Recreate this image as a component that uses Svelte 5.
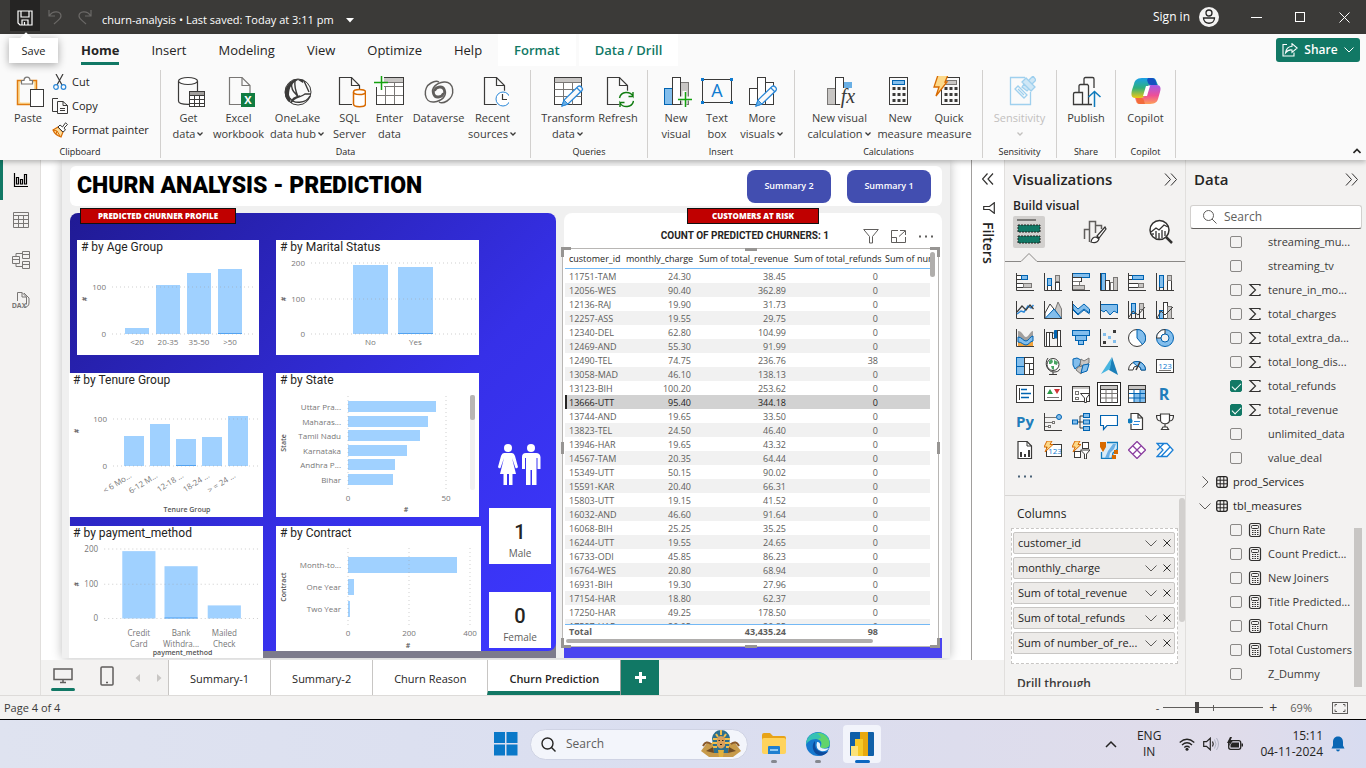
<script>
  const D = '#3b3a39';
  const B = '#83beec';
  const BS = '#0063b1';
  const G = '#c8c6c4';
  const GS = '#797775';
  const box = (x, y, w, h, f = 'none', s = D) => `<rect x="${x}" y="${y}" width="${w}" height="${h}" fill="${f}" stroke="${s}"/>`;
  const line = (d, s = D, w = 1, f = 'none') => `<path d="${d}" fill="${f}" stroke="${s}" stroke-width="${w}"/>`;
  const axis = line('M.5 0V17.5H18');
  const dot = (x, y, r, f, s = 'none') => `<circle cx="${x}" cy="${y}" r="${r}" fill="${f}" stroke="${s}"/>`;
  const glyph = (x, y, size, f, t, extra = '') => `<text x="${x}" y="${y}" font-size="${size}" fill="${f}" text-anchor="middle" ${extra}>${t}</text>`;
  const bolt = (x, y) => `<path transform="translate(${x} ${y})" d="M3 0H8L6 3.5H9L1 11L3.2 6H0Z" fill="#fcd98a" stroke="#d86a00"/>`;
  const pages = (x) => line(`M${x} 1.5H${x + 12}L${x + 20} 9.5V28.5H${x}Z`, D, 1.2, '#fafafa') + line(`M${x + 12} 1.5V9.5H${x + 20}`, D, 1.2);
  const pencil = line('M10 30L12 24L26 10.5C28 9 31.500 12 30 14.500L16 28Z', '#2b88d8', 1.300, '#fafafa') + line('M10 30L12 24L16 28Z', '#2b88d8', 1, '#69afe5') + line('M25 12L29 16', '#2b88d8', 1.200);
  const keypad = (x) => {
    let s = box(x, 1.5, 18, 27, '#fafafa', D);
    for (let r = 0; r < 3; r++) for (let c = 0; c < 3; c++) s += `<rect x="${x + 3 + c * 5}" y="${11 + r * 6}" width="3" height="3" fill="${D}"/>`;
    return s;
  };

  const ribbonIcons = {
    paste: line('M5.500 4.500H24.500V28.500H5.500Z', '#e07b10', 1.500, '#fcdc9a') + line('M8.500 7H21.500V26H8.500Z', '#fafafa', 1, '#fafafa') + line('M9.500 8V4.500H12C12 0 18 0 18 4.500H20.500V8Z', GS, 1.200, '#fff') + box(18.5, 13.5, 13, 17, '#fff'),
    getdata: line('M5.500 5V25C5.500 29.500 24.500 29.500 24.500 25V5', D, 1.200, '#fafafa') + '<ellipse cx="15" cy="5" rx="9.500" ry="3.500" fill="#fff" stroke="#3b3a39" stroke-width="1.200"/>' + box(16.5, 15.5, 15, 15, '#fff') + '<path d="M17 16h14v3H17z" fill="#a19f9d"/>' + line('M16.500 19.500H31.500M16.500 23.500H31.500M16.500 27.500H31.500M21.500 19.500V30.500M26.500 19.500V30.500', D),
    excel: line('M6.500 1.500H19L27 9.500V28.500H6.500Z', GS, 1.200, '#fafafa') + line('M19 1.500V9.500H27', GS, 1.200) + '<path d="M18 17h14v14H18z" fill="#107c41"/>' + glyph(25, 28, 11, '#fff', 'X', 'font-weight="700"'),
    onelake: dot(16, 16, 13, '#fafafa', D) + '<path d="M14 3C2 7 0 20 7 26C9 26 9 23 7 19C7 11 10 7 16 4L21 7L22 4Z" fill="#3b3a39"/>' + line('M10 6C8 15 14 17 16 21C14 16 12 11 13 5M9 27C13 20 18 22 23 18L29 18M22 5L27 16M8 22C11 28 24 28 28 20M18 20C12 21 10 23 9 26', D, 1.400),
    sql: pages(5.5) + '<path d="M18 13h15v19H18z" fill="#fafafa"/>' + line('M19.500 16V28C19.500 31.500 31.500 31.500 31.500 28V16', '#d86a00', 1.500, '#fff') + '<ellipse cx="25.500" cy="16" rx="6" ry="2.500" fill="#fff" stroke="#d86a00" stroke-width="1.500"/>',
    enter: box(2.5, 1.5, 27, 27, '#fff') + '<path d="M10 2h19v4H10z" fill="#c8c6c4"/>' + line('M2.500 10.500H29.500M2.500 19.500H29.500M11.500 10V28.500M20.500 6V28.500M10 6.500H29.500', GS) + box(2.5, 1.5, 27, 27, 'none') + '<path d="M0 0H10V11H0Z" fill="#fafafa"/>' + line('M0 6.500H14M7.500 0V14', '#13a10e', 1.500),
    dataverse: line('M8 7C-1 12 1 27 11 26C19 25 24 20 22 14C20 8 11 10 11 16C11 21 18 22 20 17M24 25C33 20 31 5 21 6C13 7 8 12 10 18C12 24 21 22 21 16C21 11 14 10 12 15M8 7C13 4 16 6 16 6M24 25C19 28 16 26 16 26', '#605e5c', 1.500),
    recent: pages(7.5) + '<circle cx="26" cy="23" r="8.500" fill="#fafafa"/>' + dot(26, 23, 7, '#fff', '#2b88d8') + line('M25.500 18V23.500H30', D, 1.200),
    transform: box(2.5, 1.5, 27, 27, '#fff') + '<path d="M3 2h26v4H3z" fill="#c8c6c4"/>' + line('M2.500 6.500H29.500M2.500 13.500H29.500M2.500 20.500H29.500M11.500 6V28.500M20.500 6V28.500', GS) + pencil,
    refresh: pages(5.5) + '<circle cx="24.500" cy="23.500" r="9" fill="#fafafa"/>' + line('M17.500 22C19 15 28 15 31 20V16M31 20.500H26.500M31.500 25C30 32 21 32 18 27V31M18 26.500H22.500', '#107c10', 1.400),
    newvisual: box(4.5, 12.5, 8, 16, B, BS) + box(20.5, 6.5, 8, 22, G, GS) + box(12.5, 1.5, 8, 27, '#fff') + line('M17 22.500H32M24.500 15V31', '#fafafa', 4) + line('M18 23.500H32M25.500 16V31', '#13a10e', 1.500),
    textbox: box(1.5, 3.5, 29, 23, '#fafafa') + glyph(16, 21, 18, '#0f7bd0', 'A') + '<path d="M0 2h3v3H0zM29 2h3v3h-3zM0 25h3v3H0zM29 25h3v3h-3z" fill="#0f7bd0"/>',
    more: box(3.5, 12.5, 8, 16, '#fff') + box(19.5, 6.5, 8, 22, '#fff') + box(11.5, 1.5, 8, 27, '#fff') + pencil,
    calc: box(3.5, 12.5, 8, 16, G, GS) + '<path d="M20 6h8v9h-8z" fill="#69afe5"/>' + box(11.5, 1.5, 8, 27, '#fff') + '<path d="M18 12h13v18H16z" fill="#fafafa"/>' + glyph(24, 27, 20, D, 'fx', 'font-style="italic" font-family="Liberation Serif, serif"'),
    measure: keypad(5.5) + box(8.5, 4.5, 12, 4, B, BS),
    quick: keypad(8.5) + box(11.5, 4.500, 12, 4, G, GS) + '<path d="M5 -1H15L12 6H14L3 20L6 11H1Z" fill="#fcd98a" stroke="#d86a00" stroke-width="1.300"/>',
    sensitivity: line('M21 1.500H6.500V28.500H26.500V16', '#9fd0ee', 1.300) + line('M11 13L14 10L23 19L20 22ZM14 13L20 19', '#9fd0ee', 1.300) + line('M18 6L27 15L31 11L22 2ZM25 4L29 0L32 4L28 8M20 8L18 11L23 15L25 13', '#9fd0ee', 1.300, '#cfe7f6'),
    publish: line('M3.500 28.500V18Q3.500 16.500 5 16.500H12.500V28.500ZM9 16V10Q9 8.500 10.500 8.500H18M14 8V3Q14 1.500 15.500 1.500H22.500Q24 1.500 24 3V12M18.500 28.500V10Q18.500 8.500 17 8.500H14M12.500 28.500H22', D, 1.300) + line('M24.500 31V16M18.500 21L24.500 15.500L30.500 21', '#0f7bbd', 1.500),
    copilot: '<defs><linearGradient id="ca" x1="0" y1="0" x2="0" y2="1"><stop offset="0" stop-color="#1aa0e8"/><stop offset=".5" stop-color="#2eb07c"/><stop offset="1" stop-color="#f2c811"/></linearGradient><linearGradient id="cb" x1="0" y1="0" x2="0" y2="1"><stop offset="0" stop-color="#a35be8"/><stop offset=".55" stop-color="#ee4f97"/><stop offset="1" stop-color="#ffa057"/></linearGradient></defs><path d="M14 2H23C26 2 26 5 28 9H20C17 9 17 13 15 20C14 22 12 22 9 22H5C1 22 1 18 2 14L4 8C5 3 8 2 14 2Z" fill="url(#ca)"/><path d="M18 2H22C25 2 26 5 27 9H21C18 9 18 6 17 4Z" fill="#1550c0"/><path d="M18 28H9C6 28 6 24 5 22H11C15 22 15 18 17 12C18 9 20 9 23 9H27C31 9 31 13 30 16L28 23C27 27 24 28 18 28Z" fill="url(#cb)"/><path d="M14 28H10C7 28 7 25 6 22H11C14 22 14 25 15 28Z" fill="#f26b3c"/><path d="M13 20L16 10H20L17 20Z" fill="#fff"/>'
  };

  const groups = [
    { name: 'Data', w: 370, items: [
      { i: 'getdata', a: 'Get', b: 'data', c: 1, w: 50 }, { i: 'excel', a: 'Excel', b: 'workbook', w: 50 },
      { i: 'onelake', a: 'OneLake', b: 'data hub', c: 1, w: 68 }, { i: 'sql', a: 'SQL', b: 'Server', w: 36 },
      { i: 'enter', a: 'Enter', b: 'data', w: 44 }, { i: 'dataverse', a: 'Dataverse', b: '', w: 54 },
      { i: 'recent', a: 'Recent', b: 'sources', c: 1, w: 54 } ] },
    { name: 'Queries', w: 117, items: [
      { i: 'transform', a: 'Transform', b: 'data', c: 1, w: 58 }, { i: 'refresh', a: 'Refresh', b: '', w: 42 } ] },
    { name: 'Insert', w: 147, items: [
      { i: 'newvisual', a: 'New', b: 'visual', w: 42 }, { i: 'textbox', a: 'Text', b: 'box', w: 40 }, { i: 'more', a: 'More', b: 'visuals', c: 1, w: 50 } ] },
    { name: 'Calculations', w: 188, items: [
      { i: 'calc', a: 'New visual', b: 'calculation', c: 1, w: 72 }, { i: 'measure', a: 'New', b: 'measure', w: 49 }, { i: 'quick', a: 'Quick', b: 'measure', w: 49 } ] },
    { name: 'Sensitivity', w: 74, items: [{ i: 'sensitivity', a: 'Sensitivity', b: '', c: 1, w: 60, off: true }] },
    { name: 'Share', w: 59, items: [{ i: 'publish', a: 'Publish', b: '', w: 50 }] },
    { name: 'Copilot', w: 60, items: [{ i: 'copilot', a: 'Copilot', b: '', w: 50 }] }
  ];

  const tableHead = (f) => box(0.5, 0.5, 17, 17, '#fff') + `<path d="M1 1h16v3H1z" fill="${f}"/>` + line('M.5 4.500H17.500', D);
  const vizIcons = [
    ['Stacked bar chart', axis + box(0.5, 2.5, 5, 4, '#fff') + box(5.5, 2.5, 6, 4, B, BS) + box(0.5, 10.5, 7, 4, '#fff') + box(7.5, 10.5, 8, 4, G, GS)],
    ['Stacked column chart', axis + box(3.5, 12.5, 4, 5, '#fff') + box(3.5, 5.5, 4, 7, B, BS) + box(11.5, 9.5, 4, 8, '#fff') + box(11.5, 2.5, 4, 6, G, GS)],
    ['Clustered bar chart', box(0.5, 0.5, 17, 4, B, BS) + box(0.5, 4.5, 9, 4, '#fff') + box(0.5, 8.5, 7, 4, '#fff', GS) + box(0.5, 12.5, 12, 4, G, GS) + axis],
    ['Clustered column chart', box(1.5, 0.5, 4, 17, B, BS) + box(5.5, 7.5, 4, 10, '#fff') + box(10.5, 9.5, 3, 8, '#fff', GS) + box(13.5, 4.5, 4, 13, G, GS) + axis],
    ['100% stacked bar chart', axis + box(0.5, 2.5, 4, 4, '#fff') + box(4.5, 2.5, 11, 4, B, BS) + box(0.5, 10.5, 10, 4, '#fff') + box(10.5, 10.5, 5, 4, G, GS)],
    ['100% stacked column chart', axis + box(3.5, 2.5, 4, 12, B, BS) + line('M3.500 14V17.500H7.500V14') + box(11.5, 7.5, 4, 10, '#fff') + box(11.5, 2.5, 4, 5, G, GS)],
    ['Line chart', axis + line('M1 13L5 10L8 11L12 5L15 7L17.500 4', '#2b88d8', 1.500) + line('M1 11L6 5L10 9L14 4L17.500 8', D, 1.200)],
    ['Area chart', line('M8 17.500L14 1L17.500 8V17.500Z', GS, 1, G) + line('M1 12L6 3L13 12L8 17.500H1Z', D, 1, '#fff') + line('M1 17.500L10 8L17.500 17.500Z', BS, 1, B) + axis],
    ['Stacked area chart', line('M1 3L6 8L12 3L17.500 8V12L12 8L6 13L1 8Z', BS, 1, B) + line('M1 9L6 14L12 9L17.500 13', BS) + axis],
    ['100% stacked area chart', line('M.5 3.500H17.500V12L14 10L10 14L6 9L4 11L.5 9Z', BS, 1, B) + axis],
    ['Line and stacked column chart', axis + box(3.5, 2.5, 4, 10, B, BS) + line('M3.500 12V17.500H7.500V12') + box(11.5, 2.5, 4, 6, G, GS) + line('M11.500 9V17.500H15.500V9') + line('M1 16L5 10L10 14L17 6')],
    ['Line and clustered column chart', axis + box(3.5, 9.5, 4, 8, B, BS) + box(7.5, 1.5, 4, 16, '#fff') + box(11.5, 5.5, 4, 12, G, GS) + line('M1 17L5 10L9 14L17 6')],
    ['Ribbon chart', '<path d="M2 2C7 2 7 8 10 8S14 2 17 2V8C13 8 13 13 10 13S6 8 2 8Z" fill="#a19f9d"/><path d="M2 10C6 8 7 15 10 15S14 8 17 8V17H2Z" fill="#f2a33c"/><path d="M2 8C6 8 7 12 10 12S14 7 17 7V12C14 12 13 16 10 16S6 13 2 13Z" fill="#83beec" stroke="#0063b1"/>' + axis],
    ['Waterfall chart', axis + box(2.5, 3.5, 3, 14, '#fff') + line('M5.500 3.500H9M8.500 4V9.500H10.500V4Z', D) + line('M10.500 1.500H13.500V9H10.500Z', BS, 1, BS) + box(13.5, 1.5, 3, 16, '#fff')],
    ['Funnel', box(0.5, 1.5, 17, 5, B, BS) + box(3.5, 6.5, 11, 5, B, BS) + box(6.5, 11.5, 5, 4, B, BS)],
    ['Scatter chart', axis + '<path d="M13 1h3v3h-3zM3 12h3v3H3z" fill="#3b3a39"/><path d="M3 4h3v3H3zM8 7h3v3H8zM13 11h3v3h-3z" fill="#83beec"/>'],
    ['Pie chart', dot(9, 9, 8.5, '#fff', D) + line('M9 .500A8.500 8.500 0 0 1 14.500 15.500L9 9Z', BS, 1, B)],
    ['Donut chart', dot(9, 9, 8.5, B, BS) + line('M.500 9A8.500 8.500 0 0 1 9 .500V5A4 4 0 0 0 5 9Z', D, 1, '#fff') + dot(9, 9, 4, '#f3f2f1', BS)],
    ['Treemap', box(0.5, 0.5, 8, 17, B, BS) + line('M.500 9.500H8.500', BS) + box(8.5, 0.5, 9, 6, '#fff') + box(8.5, 6.5, 5, 11, '#fff') + box(13.5, 6.5, 4, 6, '#fff') + box(13.5, 12.500, 4, 5, '#fff')],
    ['Map', dot(9, 7.5, 6, '#fff', D) + '<path d="M5 4L8 2L9 5L7 7L5 7ZM10 3L14 5L13 8L10 7ZM7 9L10 9L10 13L8 12Z" fill="#4aa564"/>' + line('M4 1C0 6 3 15 10 15C13 15 15 14 16 12M9 15V17.500M5 17.500H13', D)],
    ['Filled map', line('M1 2L5 1L9 3L8 8L3 12L1 8Z', BS, 1, B) + line('M9 2L12 4L17 1V6L13 9L8 8Z', GS, 1, G) + line('M6 10L11 9L9 17L4 13Z', GS, 1, G) + line('M11 8L17 7L15 14L9 16Z', BS, 1, B)],
    ['Azure map', '<path d="M12 0L18 18L9 13Z" fill="#1b7fb8"/><path d="M12 0L1 17L10 12Z" fill="#48b5e0"/>'],
    ['Gauge', line('M.500 13A8.500 8.500 0 0 1 17.500 13H13A4 4 0 0 0 5 13Z', D, 1, '#fff') + line('M5 5.500A8.500 8.500 0 0 1 17.500 13H13C13 10 11 9 9 9Z', BS, 1, B) + line('M8 13L12 5', D, 1.500)],
    ['Card', box(0.5, 2.5, 17, 13, '#fff') + glyph(9, 12, 8, '#0f7bd0', '123') + line('M3 13.500H15', GS)],
    ['Multi-row card', box(0.5, 0.5, 17, 17, '#fff') + line('M3.500 3V15', D) + line('M5 4.500H11M5 8.500H15M5 12.500H13', '#0063b1', 1.500)],
    ['KPI', box(0.5, 1.5, 17, 14, '#fff') + '<path d="M3 9L6 4L9 9Z" fill="#2b9b48"/><path d="M10 4H16L13 9Z" fill="#d13438"/>' + line('M3 12.500H15', GS)],
    ['Slicer', box(0.5, 1.5, 17, 15, '#fff') + '<path d="M1 2h16v2H1z" fill="#c8c6c4"/>' + box(3.5, 6.5, 3, 3, '#fff', GS) + box(3.5, 12.5, 3, 2, '#fff', GS) + line('M8.500 8.500H18L14.500 13V17.500H12.500V13Z', D, 1, '#fff')],
    ['Table', tableHead(G) + line('M.500 8.500H17.500M.500 13H17.500M6 4.500V17.500M12 4.500V17.500', GS), true],
    ['Matrix', tableHead(G) + '<path d="M6 9h11v8H6zM12 5h5v4h-5z" fill="#83beec"/>' + line('M.500 8.500H17.500M.500 13H17.500M6 4.500V17.500M12 4.500V17.500', BS) + box(0.5, 0.5, 17, 17)],
    ['R script visual', glyph(8, 15, 16, '#217dbb', 'R', 'font-weight="700"')],
    ['Python visual', glyph(9, 14, 15, '#217dbb', 'Py', 'font-weight="700"')],
    ['Key influencers', axis + line('M1 4.500H12M1 9.500H8M1 13.500H4', GS) + dot(15, 4, 2.5, B, BS) + box(8.5, 8.5, 2, 2, '#fff', GS) + box(4.5, 12.5, 2, 2, '#fff', GS)],
    ['Decomposition tree', line('M5 9H8M11 3H8V15H11M8 9H11', D) + box(0.5, 7, 5, 4, B, BS) + box(11.5, 0.5, 6, 4, B, BS) + box(11.5, 7, 6, 4, B, BS) + box(11.5, 13.5, 6, 4, B, BS)],
    ['Q&A', line('M.500 2.500H17.500V12.500H7L3.500 16.500V12.500H.500Z', '#0063b1', 1.200, '#fff')],
    ['Smart narrative', line('M3 8V.500H10L14.500 5V16.500H3V11M10 .500V5H14.500', D, 1.200, '#fff') + dot(2, 8, 2.5, '#0f7bbd') + line('M6 8.500H12M5 11.500H11', '#2b88d8')],
    ['Metrics', line('M4.500 1H13.500V7C13.500 12 4.500 12 4.500 7ZM4.500 2.500H.500C.500 7 2 8 5 8M13.500 2.500H17.500C17.500 7 16 8 13 8M9 11V14M5.500 16.500H12.500L11 14H7Z', D, 1.200, '#fff')],
    ['Paginated report', line('M2 .500H11L15.500 5V17.500H2Z', D, 1.200, '#fff') + line('M11 .500V5H15.500', D) + '<path d="M4 11h2v5H4zM8 13h2v3H8zM12 9h2v7h-2z" fill="#3b3a39"/>'],
    ['Card (new)', box(2.5, 3.500, 15, 12, '#fff') + glyph(11, 13, 8, '#0f7bd0', '123') + bolt(0, 0)],
    ['Slicer (new)', box(10.5, 1.5, 6, 6, '#fff') + box(2.5, 10.5, 6, 6, '#fff') + line('M8.500 9H18L14.500 13V18H12.500V13Z', D, 1, '#fff') + bolt(0, 0)],
    ['ArcGIS map', line('M7 1.500H17.500V8L13 12L12 17.500H1.500V11', '#0f7bbd', 1.300, '#d8ecf8') + '<path d="M13 3H16L14 8L10 12L9 17H5L8 10Z" fill="#69afe5"/><path d="M0 1H6V6L3 11L0 6ZM14 9h4v4h-4zM12 14h4v4h-4z" fill="#d86a00"/>'],
    ['Power Apps', line('M9 .500L17.500 9L9 17.500L.500 9ZM5 5L13 13M13 5L5 13', '#8b3fa0', 1.300, '#fff')],
    ['Power Automate', line('M1 2.500H11L17 9L11 15.500H1L7 9ZM8 2.500L1 9M14 6L5 15.500', '#1a7fd6', 1.300, '#fff')]
  ];

  const rows = [
    ['11751-TAM', '24.30', '38.45', '0'], ['12056-WES', '90.40', '362.89', '0'], ['12136-RAJ', '19.90', '31.73', '0'],
    ['12257-ASS', '19.55', '29.75', '0'], ['12340-DEL', '62.80', '104.99', '0'], ['12469-AND', '55.30', '91.99', '0'],
    ['12490-TEL', '74.75', '236.76', '38'], ['13058-MAD', '46.10', '138.13', '0'], ['13123-BIH', '100.20', '253.62', '0'],
    ['13666-UTT', '95.40', '344.18', '0'], ['13744-AND', '19.65', '33.50', '0'], ['13823-TEL', '24.50', '46.40', '0'],
    ['13946-HAR', '19.65', '43.32', '0'], ['14567-TAM', '20.35', '64.44', '0'], ['15349-UTT', '50.15', '90.02', '0'],
    ['15591-KAR', '20.40', '66.31', '0'], ['15803-UTT', '19.15', '41.52', '0'], ['16032-AND', '46.60', '91.64', '0'],
    ['16068-BIH', '25.25', '35.25', '0'], ['16244-UTT', '19.55', '24.65', '0'], ['16733-ODI', '45.85', '86.23', '0'],
    ['16764-WES', '20.80', '68.94', '0'], ['16931-BIH', '19.30', '27.96', '0'], ['17154-HAR', '18.80', '62.37', '0'],
    ['17250-HAR', '49.25', '178.50', '0'], ['17597-HAR', '20.05', '20.85', '0']
  ];

  const age = { title: '# by Age Group', w: 182, h: 115, x1: 35, base: 94, ax: 8, ay: 59, grid: [[47, '100'], [94, '0']], bw: 24,
    bars: [[48, 88, ['<20']], [79, 45, ['20-35']], [110, 33, ['35-50']], [141, 29, ['>50'], 1]] };
  const marital = { title: '# by Marital Status', w: 203, h: 115, x1: 35, base: 94, ax: 8, ay: 59, grid: [[23, '200'], [59, '100'], [94, '0']], bw: 35,
    bars: [[77, 25, ['No']], [122, 27, ['Yes'], 1]] };
  const tenure = { title: '# by Tenure Group', w: 194, h: 144, x1: 44, base: 93, ax: 8, ay: 58, grid: [[46, '100'], [93, '0']], bw: 20, tilt: true, foot: 'Tenure Group', fx: 118, fy: 139,
    bars: [[55, 63, ['< 6 Mo...']], [81, 51, ['6-12 M...']], [107, 66, ['12-18 ...'], 1], [133, 64, ['18-24 ...']], [159, 43, ['> = 24 ...']]] };
  const payment = { title: '# by payment_method', w: 193, h: 132, x1: 35, base: 92, ax: 8, ay: 58, grid: [[23, '200'], [58, '100'], [92, '0']], bw: 33, lab: 109, foot: 'payment_method', fx: 113, fy: 128,
    bars: [[53, 25, ['Credit', 'Card']], [95, 40, ['Bank', 'Withdra...'], 1], [138, 79, ['Mailed', 'Check']]] };
  const region = { title: '# by State', w: 203, h: 144, y1: 23, y2: 118, axisY: 128, hashY: 139, grid: [[72, '0'], [170, '50']], name: 'State', ny: 70, bh: 11, scroll: true, hx: 130,
    bars: [[28, 88, 'Uttar Pra...'], [43, 80, 'Maharas...'], [57, 72, 'Tamil Nadu'], [72, 59, 'Karnataka'], [86, 47, 'Andhra P...'], [101, 45, 'Bihar']] };
  const contract = { title: '# by Contract', w: 205, h: 125, y1: 22, y2: 100, axisY: 110, hashY: 122, grid: [[72, '0'], [133, '200'], [194, '400']], name: 'Contract', ny: 61, bh: 16, hx: 132,
    bars: [[31, 109, 'Month-to...'], [53, 6, 'One Year'], [75, 2, 'Two Year']] };

  const fields = [
    ['streaming_mu...'], ['streaming_tv'], ['tenure_in_mo...', 1], ['total_charges', 1], ['total_extra_da...', 1],
    ['total_long_dis...', 1], ['total_refunds', 1, true], ['total_revenue', 1, true], ['unlimited_data'], ['value_deal']
  ];
  const measures = [['Churn Rate', 2], ['Count Predict...', 2], ['New Joiners', 2], ['Title Predicted...', 2], ['Total Churn', 2], ['Total Customers', 2], ['Z_Dummy']];
  const wells = ['customer_id', 'monthly_charge', 'Sum of total_revenue', 'Sum of total_refunds', 'Sum of number_of_re...'];
  const sheets = ['Summary-1', 'Summary-2', 'Churn Reason', 'Churn Prediction'];
  let zoom = $state(33);
</script>

{#snippet chevron(w = 8)}
  <svg class="chev" width={w} height={w} viewBox="0 0 8 8"><path d="M1.500 2.500L4 5L6.500 2.500" fill="none" stroke="currentColor" stroke-width="1.300" /></svg>
{/snippet}

{#snippet field(f)}
  <label class="field">
    <input type="checkbox" checked={f[2] || false} />
    <span class="kind">
      {#if f[1] === 1}
        <svg width="14" height="14" viewBox="0 0 14 14"><path d="M12 3V1.500H2L7.500 7L2 12.500H12V11" fill="none" stroke="#323130" stroke-width="1.200" /></svg>
      {:else if f[1] === 2}
        <svg width="14" height="16" viewBox="0 0 14 16"><rect x="1.500" y="1.500" width="11" height="13" rx="2" fill="none" stroke="#323130" stroke-width="1.200" /><rect x="3.500" y="3.500" width="7" height="3" rx="1" fill="none" stroke="#323130" /><path d="M4 8.500h1.500M6.500 8.500h1.500M9 8.500h1.500M4 10.500h1.500M6.500 10.500h1.500M9 10.500h1.500M4 12.500h1.500M6.500 12.500h1.500M9 12.500h1.500" stroke="#323130" /></svg>
      {/if}
    </span>
    {f[0]}
  </label>
{/snippet}

{#snippet tableNode(name, open)}
  <button class="node">
    <svg width="12" height="12" viewBox="0 0 12 12"><path d={open ? 'M.500 3.500L6 9L11.500 3.500' : 'M3.500 .500L9 6L3.500 11.500'} fill="none" stroke="#605e5c" /></svg>
    <svg width="12" height="12" viewBox="0 0 12 12"><rect x=".7" y=".7" width="10.600" height="10.600" rx="2" fill="none" stroke="#252423" stroke-width="1.300" /><path d="M4.200 1V11M7.800 1V11M1 4.200H11M1 7.800H11" stroke="#252423" /></svg>
    {name}
  </button>
{/snippet}

{#snippet columns(c, cls)}
  <article class="card {cls}">
    <svg class="chart" viewBox="0 0 {c.w} {c.h}" role="img" aria-label={c.title}>
      <text class="title" x="4" y="11">{c.title}</text>
      {#each c.bars as b}
        <rect class="bar" x={b[0]} y={b[1]} width={c.bw} height={c.base - b[1]} />
        {#if b[3]}<rect class="strip" x={b[0]} y={c.base - 1} width={c.bw} height="1" />{/if}
        {#each b[2] as t, i}
          {#if c.tilt}
            <text class="tick" text-anchor="end" transform="translate({b[0] + 8} {c.base + 11}) rotate(-32)">{t}</text>
          {:else}
            <text class="tick" text-anchor="middle" x={b[0] + c.bw / 2} y={(c.lab || c.base + 11) + i * 11}>{t}</text>
          {/if}
        {/each}
      {/each}
      {#each c.grid as g}
        <path class="grid" d="M{c.x1} {g[0]}H{c.w - 3}" />
        <text class="tick" x={c.x1 - 6} y={g[0] + 3} text-anchor="end">{g[1]}</text>
      {/each}
      <text class="name" text-anchor="middle" transform="translate({c.ax + 2} {c.ay}) rotate(-90)">#</text>
      {#if c.foot}<text class="name" text-anchor="middle" x={c.fx} y={c.fy}>{c.foot}</text>{/if}
    </svg>
  </article>
{/snippet}

{#snippet bars(c, cls)}
  <article class="card {cls}">
    <svg class="chart" viewBox="0 0 {c.w} {c.h}" role="img" aria-label={c.title}>
      <text class="title" x="4" y="11">{c.title}</text>
      {#each c.bars as b}
        <rect class="bar" x="72" y={b[0]} width={b[1]} height={c.bh} />
        <text class="tick" text-anchor="end" x="65" y={b[0] + c.bh / 2 + 3}>{b[2]}</text>
      {/each}
      {#each c.grid as g}
        <path class="grid" d="M{g[0]} {c.y1}V{c.y2}" />
        <text class="tick" x={g[0]} y={c.axisY} text-anchor="middle">{g[1]}</text>
      {/each}
      <text class="name" text-anchor="middle" transform="translate(10 {c.ny}) rotate(-90)">{c.name}</text>
      <text class="name" text-anchor="middle" x={c.hx} y={c.hashY}>#</text>
      {#if c.scroll}
        <rect x="194" y="22" width="5" height="95" rx="2" fill="#f0f0f0" /><rect x="194" y="22" width="5" height="25" rx="2" fill="#b8b6b4" />
      {/if}
    </svg>
  </article>
{/snippet}

<div class="app">
  <header class="titlebar">
    <button class="save" aria-label="Save">
      <svg width="16" height="16" viewBox="0 0 16 16"><path d="M1 1H15V15H3L1 13ZM4 1V7H12V1M5 15V10H11V15M7.500 12V15" fill="none" stroke="#fff" stroke-width="1.200" /></svg>
      <span class="tip">Save</span>
    </button>
    <button class="hist" aria-label="Undo"><svg width="14" height="16" viewBox="0 0 14 16"><path d="M1 1V7H7M1.500 6.500C5 1 13 2 13 7C13 10 10 11 6 15" fill="none" stroke="#6b6967" stroke-width="1.200" /></svg></button>
    <button class="hist" aria-label="Redo"><svg width="14" height="16" viewBox="0 0 14 16"><path d="M13 1V7H7M12.500 6.500C9 1 1 2 1 7C1 10 4 11 8 15" fill="none" stroke="#6b6967" stroke-width="1.200" /></svg></button>
    <button class="doc">churn-analysis • Last saved: Today at 3:11 pm <svg width="8" height="5" viewBox="0 0 8 5"><path d="M0 0H8L4 4.500Z" fill="#fff" /></svg></button>
    <div class="fill"></div>
    <button class="signin">Sign in
      <svg width="20" height="20" viewBox="0 0 20 20"><circle cx="10" cy="10" r="10" fill="#f3f2f1" /><circle cx="10" cy="6" r="3" fill="none" stroke="#252423" stroke-width="1.300" /><path d="M4.500 11H15.500C15.500 18 4.500 18 4.500 11Z" fill="none" stroke="#252423" stroke-width="1.300" /></svg>
    </button>
    <button class="win" aria-label="Minimize"><svg width="11" height="11" viewBox="0 0 11 11"><path d="M0 5.500H11" stroke="#fff" /></svg></button>
    <button class="win" aria-label="Maximize"><svg width="11" height="11" viewBox="0 0 11 11"><rect x=".5" y=".5" width="9" height="9" fill="none" stroke="#fff" /></svg></button>
    <button class="win" aria-label="Close"><svg width="11" height="11" viewBox="0 0 11 11"><path d="M.500 .500L10.500 10.500M10.500 .500L.500 10.500" stroke="#fff" /></svg></button>
  </header>

  <section class="ribbon">
    <nav class="tabs">
      <button class="tab on">Home</button>
      <button class="tab">Insert</button>
      <button class="tab">Modeling</button>
      <button class="tab">View</button>
      <button class="tab">Optimize</button>
      <button class="tab">Help</button>
      <button class="tab ctx">Format</button>
      <button class="tab ctx">Data / Drill</button>
      <div class="fill"></div>
      <button class="share">
        <svg width="16" height="14" viewBox="0 0 16 14"><path d="M5 1.500H1V13H12V9.500M10 .700L15.200 5L10 9.300V7C7 6.500 5 8 3.500 10C4 6 6 3.500 10 3.200Z" fill="none" stroke="#fff" stroke-width="1.100" /></svg>
        Share
        <svg width="10" height="6" viewBox="0 0 10 6"><path d="M.500 .500L5 5L9.500 .500" fill="none" stroke="#fff" /></svg>
      </button>
    </nav>
    <div class="groups">
      <div class="group clip">
        <div class="items">
          <button class="big paste"><svg width="32" height="32" viewBox="0 0 32 32">{@html ribbonIcons.paste}</svg><span>Paste</span></button>
          <div class="smalls">
            <button class="small"><svg width="16" height="16" viewBox="0 0 16 16"><path d="M4 0L10 11M11 0L5 11" stroke="#3b3a39" stroke-width="1.200" /><circle cx="4" cy="13" r="2.300" fill="none" stroke="#2b88d8" stroke-width="1.200" /><circle cx="11.500" cy="13" r="2.300" fill="none" stroke="#2b88d8" stroke-width="1.200" /></svg>Cut</button>
            <button class="small"><svg width="16" height="16" viewBox="0 0 16 16"><path d="M5 13.500H.500V.500H6M5.500 3.500H11L15.500 7.500V15.500H5.500ZM11 3.500V7.500H15.500M8 10.500H13M8 12.500H13" fill="none" stroke="#3b3a39" /></svg>Copy</button>
            <button class="small"><svg width="16" height="16" viewBox="0 0 16 16"><path d="M1 8L6 5L11 10L9 15Q3 13 1 8Z" fill="#fcdc9a" stroke="#d86a00" stroke-width="1.200" /><path d="M1 8L5 9L4 12M5 9L8 14" stroke="#d86a00" fill="none" /><path d="M6 5L8 3L10.500 5L13.500 .800L15.500 2.500L12 6L13.500 8L11 10Z" fill="#fff" stroke="#3b3a39" /></svg>Format painter</button>
          </div>
        </div>
        <span class="gname">Clipboard</span>
      </div>
      {#each groups as g, n}
        <div class="group" class:first={n === 0} style:width="{g.w}px">
          <div class="items">
            {#each g.items as b}
              <button class="big" class:off={b.off} style:width="{b.w}px">
                <svg width="32" height="32" viewBox="0 0 32 32">{@html ribbonIcons[b.i]}</svg>
                <span>{b.a}</span>
                <span class="second">{b.b}{#if b.c}{@render chevron()}{/if}</span>
              </button>
            {/each}
          </div>
          <span class="gname">{g.name}</span>
        </div>
      {/each}
      <div class="fill"></div>
      <button class="collapse" aria-label="Collapse ribbon"><svg width="8" height="6" viewBox="0 0 8 6"><path d="M.500 5L4 1.500L7.500 5" fill="none" stroke="#252423" stroke-width="1.600" /></svg></button>
    </div>
  </section>

  <main>
    <nav class="rail">
      <button class="on" aria-label="Report view"><svg width="16" height="16" viewBox="0 0 16 16"><path d="M1.500 1V14.500H15M3.500 5.500H5.500V12H3.500ZM7.500 7.500H9.500V12H7.500ZM11.500 2.500H13.500V12H11.500Z" fill="none" stroke="#000" stroke-width="1.200" /></svg></button>
      <button aria-label="Table view"><svg width="16" height="16" viewBox="0 0 16 16"><path d="M.500 .500H15.500V15.500H.500ZM.500 3.500H15.500M.500 7.500H15.500M.500 11.500H15.500M5.500 3.500V15.500M10.500 3.500V15.500" fill="none" stroke="#797775" /></svg></button>
      <button aria-label="Model view"><svg width="18" height="18" viewBox="0 0 18 18"><path d="M.500 5.500H7.500V12.500H.500ZM.500 8.500H7.500M10.500 .500H17.500V7.500H10.500ZM10.500 3.500H17.500M10.500 10.500H17.500V17.500H10.500ZM10.500 13.500H17.500M4 5V2.500H10M4 13V15.500H10" fill="none" stroke="#797775" /></svg></button>
      <button aria-label="DAX query view"><svg width="18" height="18" viewBox="0 0 18 18"><path d="M5.500 10V1.500H10L14.500 6V13.500M10 1.500V6H14.500M12 2L17 7V12C17 15 15 16 12 16.500" fill="none" stroke="#797775" /><text x="7" y="16.500" font-size="7" font-weight="700" fill="#797775" text-anchor="middle">DAX</text></svg></button>
    </nav>

    <section class="center">
      <div class="stage">
        <div class="desk">
          <div class="page">
            <header class="hero">
              <h1>CHURN ANALYSIS - PREDICTION</h1>
              <div class="links"><button>Summary 2</button><button>Summary 1</button></div>
            </header>
            <div class="panels">
              <section class="profile">
                <div class="blue">
                  <h2 class="flag">PREDICTED CHURNER PROFILE</h2>
                  <div class="cards">
                    <div class="colA">{@render columns(age, 'inset')}{@render columns(tenure, 'tall')}{@render columns(payment, 'low')}</div>
                    <div class="colB">{@render columns(marital, 'flat')}{@render bars(region, 'tall')}{@render bars(contract, 'low')}</div>
                    <div class="colC">
                      <svg class="people" viewBox="0 0 44 42"><g fill="#fff"><circle cx="10" cy="4" r="4" /><path d="M6 9H14Q16 9 17 12L20 23Q19 25 17.500 24L14 14L18 30H14.500V41H11V30H9V41H5.500V30H2L6 14L2.500 24Q1 25 0 23L3 12Q4 9 6 9Z" /><circle cx="33" cy="4" r="4" /><path d="M28 9H38Q42 9 42.500 13V25H39.500V14H38.500V41H34V26H32.500V41H28V14H27V25H24V13Q24 9 28 9Z" /></g></svg>
                      <article class="kpi"><strong>1</strong><span>Male</span></article>
                      <article class="kpi"><strong>0</strong><span>Female</span></article>
                    </div>
                  </div>
                </div>
              </section>
              <section class="risk">
                <h2 class="flag">CUSTOMERS AT RISK</h2>
                <div class="cap">
                  <h3>COUNT OF PREDICTED CHURNERS: 1</h3>
                  <button aria-label="Filters on visual"><svg width="16" height="15" viewBox="0 0 16 15"><path d="M.700 .500H15.300L9.500 7.500V14H6.500V7.500Z" fill="none" stroke="#605e5c" /></svg></button>
                  <button aria-label="Focus mode"><svg width="15" height="13" viewBox="0 0 15 13"><path d="M7 .500H.500V12.500H14.500V7M9 .500H14.500V5M14 1L8 6.500M.500 7.500H5.500V12.500" fill="none" stroke="#605e5c" /></svg></button>
                  <button aria-label="More options"><svg width="16" height="3" viewBox="0 0 16 3"><path d="M1 .500h2v2H1zM7 .500h2v2H7zM13 .500h2v2h-2z" fill="#605e5c" /></svg></button>
                </div>
                <div class="frame">
                  <i class="h tl"></i><i class="h tr"></i><i class="h bl"></i><i class="h br"></i><i class="h tm"></i><i class="h bm"></i><i class="h ml"></i><i class="h mr"></i>
                  <div class="scroller">
                    <table>
                      <colgroup><col class="c1" /><col class="c2" /><col class="c3" /><col class="c4" /><col /></colgroup>
                      <thead><tr><th>customer_id</th><th>monthly_charge</th><th>Sum of total_revenue</th><th>Sum of total_refunds</th><th>Sum of number_of_referrals</th></tr></thead>
                      <tbody>
                        {#each rows as r, i}
                          <tr class:pick={i === 9}>{#each r as c}<td>{c}</td>{/each}<td></td></tr>
                        {/each}
                      </tbody>
                      <tfoot><tr><td>Total</td><td></td><td>43,435.24</td><td>98</td><td></td></tr></tfoot>
                    </table>
                  </div>
                  <div class="hbar"></div>
                  <div class="vbar"></div>
                </div>
              </section>
            </div>
          </div>
        </div>
        <aside class="filters">
          <svg width="12" height="12" viewBox="0 0 12 12"><path d="M5.500 .500L.500 6L5.500 11.500M11 .500L6 6L11 11.500" fill="none" stroke="#323130" stroke-width="1.200" /></svg>
          <svg class="funnel" width="12" height="12" viewBox="0 0 12 12"><path d="M11.300 .700V11.300L6.500 7.500H.700V4.500H6.500Z" fill="none" stroke="#323130" stroke-width="1.200" /></svg>
          <span>Filters</span>
        </aside>
      </div>
      <nav class="sheets">
        <button class="mode on" aria-label="Desktop layout"><svg width="20" height="16" viewBox="0 0 20 16"><path d="M1 1H19V11.500H1ZM7 14.500H13M10 12V14.500" fill="none" stroke="#605e5c" stroke-width="1.500" /></svg></button>
        <button class="mode" aria-label="Mobile layout"><svg width="14" height="20" viewBox="0 0 14 20"><rect x="1" y="1" width="12" height="18" rx="1" fill="none" stroke="#605e5c" stroke-width="1.500" /><path d="M6 16.500H8" stroke="#605e5c" stroke-width="1.500" /></svg></button>
        <div class="arrows">
          <button aria-label="Previous page"><svg width="5" height="8" viewBox="0 0 5 8"><path d="M5 0V8L.500 4Z" fill="#c8c6c4" /></svg></button>
          <button aria-label="Next page"><svg width="5" height="8" viewBox="0 0 5 8"><path d="M0 0V8L4.500 4Z" fill="#c8c6c4" /></svg></button>
        </div>
        {#each sheets as s, i}
          <button class="sheet" class:on={i === 3}>{s}</button>
        {/each}
        <button class="add" aria-label="New page"><svg width="11" height="11" viewBox="0 0 11 11"><path d="M5.500 0V11M0 5.500H11" stroke="#fff" stroke-width="3" /></svg></button>
      </nav>
    </section>

    <aside class="viz">
      <div class="head"><h2>Visualizations</h2><svg width="13" height="13" viewBox="0 0 13 13"><path d="M1 .500L6.500 6.500L1 12.500M7 .500L12.500 6.500L7 12.500" fill="none" stroke="#323130" /></svg></div>
      <h3>Build visual</h3>
      <div class="modes">
        <button class="on" aria-label="Build visual"><svg width="26" height="26" viewBox="0 0 26 26"><path d="M1 1H20" stroke="#252423" /><path d="M2 6h22v7H2zM2 17h22v7H2z" fill="#117865" stroke="#252423" stroke-dasharray="2 1" /></svg></button>
        <button aria-label="Format visual"><svg width="24" height="26" viewBox="0 0 24 26"><path d="M1.500 20V10.500H6.500M6.500 23V2.500H12.500V14M12.500 6.500H18.500V10" fill="none" stroke="#605e5c" stroke-width="1.500" /><path d="M22 8L14 17L16 19L23 10ZM13 18Q9 18 8 23Q14 25 16 20Z" fill="#fff" stroke="#323130" stroke-width="1.200" /></svg></button>
        <button aria-label="Analytics"><svg width="26" height="26" viewBox="0 0 26 26"><circle cx="11.500" cy="11" r="9.500" fill="#fff" stroke="#323130" stroke-width="1.500" /><path d="M3 13L8 9L11 11L16 6L20 8M5 16V14M8 19V12M11 20V14M14 19V11M17 17V12" fill="none" stroke="#323130" stroke-width="1.300" /><path d="M18 18L24 24" stroke="#323130" stroke-width="2.500" /></svg></button>
      </div>
      <svg class="notch" width="180" height="10" viewBox="0 0 180 10"><path d="M0 9.500H16L24 1.500L32 9.500H180" fill="none" stroke="#8a8886" /></svg>
      <div class="gallery">
        {#each vizIcons as v}
          <button class:on={v[2]} aria-label={v[0]}><svg width="18" height="18" viewBox="0 0 18 18">{@html v[1]}</svg></button>
        {/each}
      </div>
      <button class="dots" aria-label="Get more visuals"><svg width="16" height="3" viewBox="0 0 16 3"><path d="M1 .500h2v2H1zM7 .500h2v2H7zM13 .500h2v2h-2z" fill="#4a6278" /></svg></button>
      <div class="build">
        <h4>Columns</h4>
        <div class="well">
          {#each wells as w}
            <div class="pill"><span>{w}</span>
              <button aria-label="Options for {w}"><svg width="12" height="7" viewBox="0 0 12 7"><path d="M.500 .500L6 6L11.500 .500" fill="none" stroke="#605e5c" /></svg></button>
              <button aria-label="Remove {w}"><svg width="8" height="8" viewBox="0 0 8 8"><path d="M.500 .500L7.500 7.500M7.500 .500L.500 7.500" stroke="#323130" /></svg></button>
            </div>
          {/each}
        </div>
        <h4 class="drill">Drill through</h4>
        <div class="thumb"></div>
      </div>
    </aside>

    <aside class="data">
      <div class="head"><h2>Data</h2><svg width="13" height="13" viewBox="0 0 13 13"><path d="M1 .500L6.500 6.500L1 12.500M7 .500L12.500 6.500L7 12.500" fill="none" stroke="#323130" /></svg></div>
      <label class="find"><svg width="14" height="14" viewBox="0 0 14 14"><circle cx="5.500" cy="5.500" r="5" fill="none" stroke="#605e5c" /><path d="M9 9L13.500 13.500" stroke="#605e5c" /></svg><input type="text" placeholder="Search" aria-label="Search fields" /></label>
      <div class="tree">
        <div class="inner">
          {#each fields as f}{@render field(f)}{/each}
          {@render tableNode('prod_Services', false)}
          {@render tableNode('tbl_measures', true)}
          {#each measures as f}{@render field(f)}{/each}
        </div>
        <div class="thumb"></div>
      </div>
    </aside>
  </main>

  <footer class="status">
    <span>Page 4 of 4</span>
    <div class="fill"></div>
    <button aria-label="Zoom out">-</button>
    <input type="range" min="0" max="100" bind:value={zoom} aria-label="Zoom" />
    <button class="plus" aria-label="Zoom in">+</button>
    <span class="pct">69%</span>
    <button class="fit" aria-label="Fit to page"><svg width="16" height="12" viewBox="0 0 16 12"><rect x=".5" y=".5" width="15" height="11" fill="none" stroke="#605e5c" /><path d="M3 4.500V2.500H5M11 2.500H13V4.500M13 7.500V9.500H11M5 9.500H3V7.500" fill="none" stroke="#605e5c" /></svg></button>
  </footer>

  <div class="taskbar">
    <div class="side"></div>
    <div class="dock">
      <button aria-label="Start"><svg width="24" height="24" viewBox="0 0 24 24"><path d="M0 0h11v11H0zM12.500 0h11v11h-11zM0 12.500h11v11H0zM12.500 12.500h11v11h-11z" fill="#0a78c8" /></svg></button>
      <label class="tasksearch">
        <svg width="15" height="15" viewBox="0 0 15 15"><circle cx="6.500" cy="6.500" r="5.500" fill="none" stroke="#252423" stroke-width="1.400" /><path d="M10.500 10.500L14.500 14.500" stroke="#252423" stroke-width="1.400" /></svg>
        <input type="text" placeholder="Search" aria-label="Search the taskbar" />
        <svg width="42" height="30" viewBox="0 0 42 30"><path d="M1 22L7 14L35 14L41 22L33 28H9Z" fill="#c79a4a" /><path d="M14 24L12 9Q14 1 21 1Q28 1 30 9L28 24Z" fill="#2d6f8e" /><path d="M13 10H17M12 14H17M13 18H17M25 10H30M25 14H30M26 18H29M16 5L18 8M26 5L24 8M21 1V6" stroke="#f0be4c" stroke-width="2" /><path d="M17 9Q21 5 25 9V17Q21 22 17 17Z" fill="#d9a05b" /><path d="M18.500 11.500H20M22 11.500H23.500M20 15.500H22" stroke="#3b2a1a" /><path d="M18 21H24L23 28H19Z" fill="#e2b13c" /><path d="M6 22L13 18L14 24ZM36 22L29 18L28 24Z" fill="#6e4b25" /><path d="M3 17Q6 11 11 15M39 17Q36 11 31 15" fill="none" stroke="#8a5a2c" stroke-width="2" /></svg>
      </label>
      <button class="appi" aria-label="File Explorer"><svg width="26" height="24" viewBox="0 0 26 24"><path d="M1 3Q1 1 3 1H9L12 4H23Q25 4 25 6V10H1Z" fill="#e8a317" /><path d="M1 8Q1 6 3 6H23Q25 6 25 8V20Q25 22 23 22H3Q1 22 1 20Z" fill="#ffd35c" /><path d="M7 15Q7 14 8 14H18Q19 14 19 15V22H7Z" fill="#1f7fd0" /><path d="M9 17h8v2H9z" fill="#8ec8f2" /></svg></button>
      <button class="appi" aria-label="Edge"><svg width="26" height="26" viewBox="0 0 26 26"><circle cx="13" cy="13" r="12" fill="#1678cf" /><path d="M1 14C1 4 10 0 17 2C24 4 26 11 24 15C22 18 17 18 15 16C18 13 16 8 11 8C6 8 2 11 1 14Z" fill="#36c2b4" /><path d="M12 2C20 2 25 8 24.500 14C23 18 17 18 15 16C18 14 17 8 11 8C14 7 20 9 12 2Z" fill="#62d46c" /><path d="M10 10C5 15 9 25 17 24.500C20 24 22 22 23.500 20C18 23 10 20 10 14Z" fill="#0c4a9c" /><path d="M12 11Q16 11 15 16Q18 19 24 17Q21 21 16 20Q10 18 12 11Z" fill="#e8f2fb" /></svg></button>
      <button class="appi live" aria-label="Power BI"><svg width="24" height="26" viewBox="0 0 24 26"><rect x="0" y="1" width="24" height="24" rx="1" fill="#0f5fa8" /><path d="M10 1H18V25H10Z" fill="#e8a80e" /><path d="M5 8H13V25H5Z" fill="#f6c927" /><path d="M1 15H8V25H1Z" fill="#fbe27a" /></svg></button>
    </div>
    <div class="tray">
      <svg width="12" height="8" viewBox="0 0 12 8"><path d="M1 7L6 2L11 7" fill="none" stroke="#252423" stroke-width="1.500" /></svg>
      <span class="lang">ENG<br />IN</span>
      <svg width="16" height="13" viewBox="0 0 16 13"><path d="M.700 4.500Q8 -2 15.300 4.500M3 7Q8 2.500 13 7M5.300 9.500Q8 7 10.700 9.500" fill="none" stroke="#252423" stroke-width="1.300" /><circle cx="8" cy="11.300" r="1.500" fill="#252423" /></svg>
      <svg width="16" height="14" viewBox="0 0 16 14"><path d="M.700 4.700H3.500L7.300 1.200V12.800L3.500 9.300H.700Z" fill="none" stroke="#252423" stroke-width="1.200" /><path d="M9.500 4.500Q11 7 9.500 9.500" fill="none" stroke="#252423" stroke-width="1.200" /><path d="M11.500 2.500Q14.500 7 11.500 11.500M13.500 1Q17.500 7 13.500 13" fill="none" stroke="#b0b3c2" /></svg>
      <svg width="17" height="14" viewBox="0 0 17 14"><rect x="1.700" y="3.700" width="12" height="8.600" rx="2" fill="none" stroke="#252423" stroke-width="1.300" /><path d="M5 5.500H12V10.500H3.500V8ZM14.500 6.500H16V9.500H14.500ZM3 0L0 6H2.500L2 9L6 3.500H3.500L5 0Z" fill="#252423" /></svg>
      <span class="clock">15:11<br />04-11-2024</span>
      <svg width="14" height="16" viewBox="0 0 14 16"><path d="M7 .500C3.500 .500 2 3 2 6V9.500L.500 12.500H13.500L12 9.500V6C12 3 10.500 .500 7 .500ZM5 13.500H9Q8.500 15.500 7 15.500Q5.500 15.500 5 13.500Z" fill="#0a66b4" /></svg>
    </div>
  </div>
</div>

<style>
  :global(body) { margin: 0; background: #f3f2f1; }
  .app { height: 100vh; display: flex; flex-direction: column; overflow: hidden; font: 12px/16px "Open Sans", "Noto Sans", sans-serif; color: #252423; }
  .app :global(*) { box-sizing: border-box; }
  button { font: inherit; color: inherit; background: none; border: 0; padding: 0; margin: 0; display: flex; align-items: center; justify-content: center; white-space: nowrap; }
  h1, h2, h3, h4 { margin: 0; }
  svg { display: block; flex: none; }
  .fill { flex: 1; }

  .titlebar { flex: none; height: 34px; background: #3b3a38; color: #fff; display: flex; align-items: center; padding-left: 10px; }
  .save { position: relative; width: 30px; height: 31px; background: #252423; align-self: flex-start; padding-top: 4px; }
  .tip { position: absolute; z-index: 5; top: 38px; left: -1px; width: 49px; height: 25px; line-height: 26px; background: #fff; color: #252423; font-size: 11px; box-shadow: 0 2px 8px #0005; }
  .tip::before { content: ''; position: absolute; top: -4px; left: 13px; width: 8px; height: 8px; background: #fff; transform: rotate(45deg); }
  .hist { width: 30px; }
  .doc { margin-left: 2px; gap: 12px; padding-top: 6px; font-size: 11px; }
  .signin { gap: 9px; margin-right: 15px; }
  .win { width: 44px; height: 34px; }

  .ribbon { flex: none; background: #fafafa; height: 126px; display: flex; flex-direction: column; box-shadow: 0 2px 5px #0004; z-index: 2; }
  .tabs { display: flex; height: 32px; padding: 0 6px 0 65px; }
  .tab { position: relative; padding: 0 16px; font-size: 13px; }
  .tab.on { font-weight: 700; }
  .tab.on::after { content: ''; position: absolute; left: 16px; right: 16px; bottom: 1px; height: 3px; background: #117865; }
  .tab.ctx { background: #fff; color: #117865; font-weight: 600; margin-right: 3px; }
  .share { align-self: center; height: 24px; width: 84px; background: #117865; color: #fff; border-radius: 3px; gap: 6px; font-weight: 600; }
  .groups { flex: 1; display: flex; padding-top: 4px; }
  .group { flex: none; height: 88px; border-right: 1px solid #d2d0ce; display: flex; flex-direction: column; align-items: center; }
  .clip { width: 161px; }
  .items { display: flex; height: 78px; padding-top: 6px; }
  .first .items { padding-right: 8px; }
  .clip .items { align-self: stretch; padding-left: 12px; }
  .gname { font-size: 9px; line-height: 12px; }
  .big { flex-direction: column; justify-content: flex-start; font-size: 11px; color: #3b3a39; line-height: 16px; overflow: visible; }
  .big span { height: 18px; line-height: 20px; }
  .big .second { display: flex; align-items: center; gap: 1px; height: 16px; }
  .big.off { color: #c2c0be; }
  .paste { width: 32px; }
  .smalls { display: flex; flex-direction: column; margin: -6px 0 0 8px; }
  .small { height: 24px; gap: 4px; justify-content: flex-start; font-size: 11px; }
  .collapse { align-self: flex-end; margin: 0 5px 6px 0; }

  main { flex: 1; min-height: 0; display: flex; background: #f3f2f1; }
  .rail { flex: none; width: 41px; border-right: 1px solid #e1dfdd; display: flex; flex-direction: column; }
  .rail button { height: 40px; border-left: 3px solid transparent; padding-right: 2px; }
  .rail .on { border-color: #117865; }
  .center { flex: 1; min-width: 0; display: flex; flex-direction: column; }
  .stage { flex: 1; min-height: 0; display: flex; background: #fff; }
  .desk { flex: 1; min-width: 0; padding: 0 21px 2px; overflow: hidden; }
  .page { height: 100%; padding: 6px 8px 0; background: #f0f0f0; box-shadow: 0 0 10px #0004; display: flex; flex-direction: column; overflow: hidden; }
  .hero { flex: none; height: 40px; background: #fff; border-radius: 6px; display: flex; align-items: center; justify-content: space-between; padding: 0 11px 0 7px; }
  h1 { font: 900 23px/40px Roboto, sans-serif; color: #000; white-space: nowrap; }
  .links { display: flex; gap: 16px; }
  .links button { width: 84px; height: 33px; border-radius: 8px; background: #424eb0; color: #fff; font-size: 9px; font-weight: 600; }
  .panels { flex: 1; min-height: 0; display: flex; gap: 8px; margin-top: 7px; }
  .profile { flex: 486; min-width: 0; background: linear-gradient(#7d7b8c, #7d7b8c) bottom / 100% 30px no-repeat; }
  .blue { height: 438px; border-radius: 8px 8px 8px 0; background: linear-gradient(135deg, #201a94, #3630e8 60%, #3d38ff); display: flex; flex-direction: column; }
  .flag { width: 156px; height: 16px; margin: -5px 0 0 10px; background: #c00000; border: 1px solid #111; color: #fff; font: 800 8px/14px "Open Sans", sans-serif; text-align: center; }
  .cards { display: grid; grid-template-columns: 194fr 210fr 62fr; column-gap: 8px; margin: 16px 5px 0 -1px; align-items: start; }
  .card { background: #fff; }
  .inset { margin: 0 4px 0 8px; }
  .tall { margin-top: 18px; }
  .low { margin-top: 9px; }
  .flat, .colB .tall { margin-right: 2px; }
  .colA, .colB { min-width: 0; }
  .colB { padding-left: 5px; }
  .chart { width: 100%; height: auto; }
  .title { font: 12px "Roboto", sans-serif; fill: #252423; }
  .tick { font: 8px "Open Sans", sans-serif; fill: #777; }
  .name { font: 600 7px "Open Sans", sans-serif; fill: #555; }
  .grid { stroke: #a0a0a0; stroke-opacity: .5; stroke-dasharray: 1 3; fill: none; }
  .bar { fill: #a0d1ff; }
  .strip { fill: #4fa3f5; }
  .colC { padding-top: 204px; }
  .people { width: 44px; height: 42px; margin: 0 auto 22px; }
  .kpi { height: 56px; background: #fff; display: flex; flex-direction: column; align-items: center; margin-bottom: 28px; }
  .kpi strong { font: 500 20px/24px "Roboto", sans-serif; padding-top: 12px; }
  .kpi span { font-size: 10px; line-height: 18px; color: #605e5c; }

  .risk { flex: 378; min-width: 0; background: linear-gradient(#4a44f0, #4a44f0) bottom / 100% 20px no-repeat, #fff; border-radius: 8px 8px 0 0; display: flex; flex-direction: column; }
  .risk .flag { width: 132px; margin: -5px auto 0; flex: none; }
  .cap { flex: none; height: 24px; display: flex; align-items: center; justify-content: flex-end; gap: 12px; padding-right: 8px; }
  .cap h3 { font: 700 10px/20px "Roboto", sans-serif; margin-right: 22px; }
  .frame { flex: 1; min-height: 0; position: relative; margin: 0 3px 11px -2px; border: 1px solid #b8b6b4; background: #fff; padding: 0 8px 1px 2px; display: flex; flex-direction: column; }
  .h { position: absolute; width: 10px; height: 10px; border: 0 solid #979593; }
  .tl { left: -2px; top: -2px; border-width: 3px 0 0 3px; }
  .tr { right: -2px; top: -2px; border-width: 3px 3px 0 0; }
  .bl { left: -2px; bottom: -2px; border-width: 0 0 3px 3px; }
  .br { right: -2px; bottom: -2px; border-width: 0 3px 3px 0; }
  .tm, .bm { left: calc(50% - 6px); width: 12px; height: 3px; background: #979593; }
  .tm { top: -1px; }
  .bm { bottom: -2px; }
  .ml, .mr { top: calc(50% - 6px); width: 3px; height: 12px; background: #979593; }
  .ml { left: -2px; }
  .mr { right: -2px; }
  .scroller { flex: 1; min-height: 0; overflow: hidden; }
  table { width: 100%; table-layout: fixed; border-collapse: separate; border-spacing: 0; font-size: 9px; line-height: 13px; color: #605e5c; }
  .c1 { width: 57px; }
  .c2 { width: 73px; }
  .c3 { width: 95px; }
  .c4 { width: 92px; }
  th, td { padding: 0 4px; height: 14px; text-align: right; font-weight: 400; white-space: nowrap; overflow: hidden; }
  th:first-child, td:first-child, th:last-child { text-align: left; overflow: visible; }
  th:last-child { padding: 0 0 0 3px; overflow: hidden; }
  th { height: 20px; color: #252423; border-bottom: 1px solid #74b9f5; }
  tbody tr:nth-child(even) td { background: #f1f1f1; }
  tbody .pick td { background: #d2d2d2 !important; color: #252423; }
  tbody .pick td:first-child { box-shadow: inset 2px 0 #252423; }
  tfoot td { position: sticky; bottom: 0; height: 14px; background: #fff; font-weight: 700; border-top: 1px solid #74b9f5; }
  .hbar { width: 84%; height: 4px; margin: 1px 0 2px 1px; border-radius: 2px; background: #b0aeac; }
  .vbar { position: absolute; right: 3px; top: 3px; width: 5px; height: 25px; border-radius: 3px; background: #b0aeac; }

  .filters { flex: none; width: 33px; border-left: 1px solid #a19f9d; display: flex; flex-direction: column; align-items: center; padding-top: 13px; }
  .funnel { margin: 17px 0 8px 2px; }
  .filters span { writing-mode: vertical-rl; font-size: 14px; font-weight: 600; line-height: 20px; }

  .sheets { flex: none; height: 35px; display: flex; background: #f3f2f1; }
  .mode { position: relative; width: 44px; padding-bottom: 4px; }
  .mode.on::after { content: ''; position: absolute; left: 10px; right: 10px; bottom: 4px; height: 3px; border-radius: 2px; background: #117865; }
  .arrows { display: flex; justify-content: space-between; width: 39px; padding: 0 6px; }
  .sheet { background: #fff; border-left: 1px solid #c8c6c4; padding: 2px 21px 0; font-size: 11px; }
  .sheet.on { font-weight: 600; border-bottom: 4px solid #117865; padding-top: 6px; }
  .add { width: 39px; background: #117865; border-left: 1px solid #a19f9d; }

  .viz { flex: none; width: 181px; border-left: 1px solid #e1dfdd; display: flex; flex-direction: column; overflow: hidden; }
  .head { flex: none; display: flex; justify-content: space-between; align-items: center; height: 38px; padding: 0 8px; }
  .head h2 { font-size: 15px; font-weight: 600; }
  .viz h3 { flex: none; font-size: 12px; font-weight: 600; padding: 0 8px; line-height: 16px; }
  .modes { flex: none; display: flex; justify-content: space-between; padding: 2px 8px 0; }
  .modes button { width: 32px; height: 32px; border-radius: 2px; }
  .modes .on { background: #d2d0ce; }
  .notch { margin-top: 4px; }
  .gallery { display: grid; grid-template-columns: repeat(6, 28px); grid-auto-rows: 28px; padding: 6px 0 0 6px; flex: none; }
  .gallery button { width: 24px; height: 24px; place-self: center; }
  .gallery .on { outline: 1px solid #252423; background: #fff; outline-offset: -1px; }
  .dots { flex: none; width: 16px; margin: 11px 0 17px 12px; }
  .build { position: relative; flex: 1; min-height: 0; border-top: 1px solid #d8d6d4; padding: 10px 7px 0 6px; overflow: hidden; margin-bottom: 8px; }
  h4 { font-size: 12px; font-weight: 400; padding-left: 6px; line-height: 16px; }
  .well { margin-top: 6px; border: 1px dashed #c8c6c4; background: #fff; padding: 3px 2px 9px 1px; display: grid; gap: 3px; }
  .pill { height: 22px; border: 1px solid #c8c6c4; border-radius: 2px; background: #edebe9; display: flex; align-items: center; gap: 6px; padding: 0 3px 0 4px; font-size: 11px; }
  .pill span { flex: 1; white-space: nowrap; }
  .drill { margin-top: 12px; font-weight: 600; color: #3b3a39; }
  .build .thumb { position: absolute; right: 0; top: 2px; width: 6px; height: 124px; border-radius: 3px; background: #d2d0ce; }

  .data { flex: none; width: 181px; border-left: 1px solid #e1dfdd; display: flex; flex-direction: column; }
  .find { flex: none; margin: 7px 4px; height: 24px; background: #fff; border: 1px solid #d2d0ce; border-bottom-color: #605e5c; border-radius: 3px; display: flex; align-items: center; gap: 7px; padding-left: 12px; }
  .find input, .tasksearch input { font: inherit; border: 0; background: none; width: 100%; min-width: 0; padding: 0; outline: 0; }
  .find input::placeholder, .tasksearch input::placeholder { color: #605e5c; opacity: 1; }
  .tree { position: relative; flex: 1; min-height: 0; overflow: hidden; }
  .inner { margin-top: -6px; }
  .field { height: 24px; display: flex; align-items: center; padding-left: 44px; font-size: 11px; color: #3b3a39; white-space: nowrap; }
  .field input { position: relative; appearance: none; flex: none; width: 12px; height: 12px; margin: 0 6px 1px 0; border: 1px solid #8a8886; border-radius: 2px; }
  .field input:checked { border-color: #117865; background: #117865; }
  .field input:checked::after { content: ''; position: absolute; left: 3px; top: 0; width: 4px; height: 8px; border: solid #fff; border-width: 0 1px 1px 0; transform: rotate(45deg); }
  .kind { width: 20px; }
  .node { height: 24px; gap: 5px; padding-left: 13px; font-size: 11px; }
  .tree .thumb { position: absolute; right: 4px; bottom: 8px; width: 8px; height: 159px; background: #c8c6c4; }

  .status { flex: none; height: 25px; background: #f3f2f1; border-top: 1px solid #dddbd9; border-bottom: 1px solid #000; display: flex; align-items: center; padding: 0 18px 0 4px; color: #3b3a39; font-size: 11px; }
  input[type='range'] { appearance: none; width: 100px; height: 12px; margin: 0 6px 0 4px; background: linear-gradient(#605e5c, #605e5c) center / 100% 1px no-repeat, linear-gradient(#605e5c, #605e5c) 50px 50% / 1px 6px no-repeat; }
  input[type='range']::-webkit-slider-thumb { appearance: none; width: 4px; height: 11px; background: #484644; }
  .plus { font-size: 14px; }
  .pct { margin: 0 20px 0 13px; color: #605e5c; }

  .taskbar { flex: none; height: 48px; background: linear-gradient(90deg, #dfe3f0, #dadef0 50%, #e0dcea 90%, #d8dcf0); display: flex; align-items: center; }
  .side, .tray { flex: 1; }
  .dock { display: flex; align-items: center; margin-left: 30px; }
  .tasksearch { width: 218px; height: 31px; margin: 0 1px 0 12px; border-radius: 16px; background: #f3f5fb; border: 1px solid #cfd3e4; display: flex; align-items: center; gap: 10px; padding: 0 5px 0 10px; font-size: 12px; }
  .appi { position: relative; width: 38px; height: 38px; margin-left: 6px; border-radius: 4px; }
  .appi::after { content: ''; position: absolute; bottom: 0; width: 6px; height: 3px; border-radius: 2px; background: #85888f; }
  .live { background: #f2f4fb; }
  .live::after { width: 15px; background: #0a66c0; }
  .tray { display: flex; align-items: center; justify-content: flex-end; gap: 8px; padding-right: 21px; }
  .lang { text-align: center; margin: 0 10px 0 12px; }
  .clock { text-align: right; margin-left: 8px; }
</style>
